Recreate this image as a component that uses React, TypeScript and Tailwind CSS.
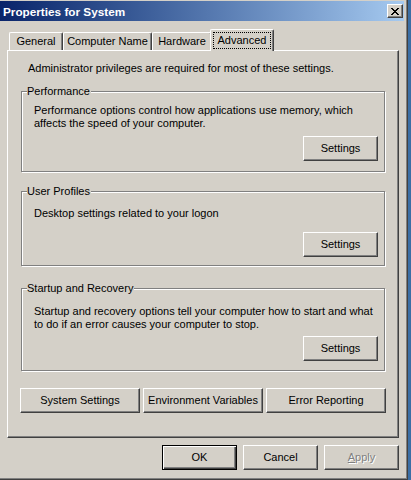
import React from "react";

function Btn({
  children,
  className = "",
  isDefault = false,
}: {
  children: React.ReactNode;
  className?: string;
  isDefault?: boolean;
}) {
  const bevel = isDefault
    ? "border border-black shadow-[inset_1px_1px_0_#fff,inset_-1px_-1px_0_#404040,inset_-2px_-2px_0_#808080]"
    : "border border-t-white border-l-white border-r-[#404040] border-b-[#404040] shadow-[inset_-1px_-1px_0_#808080]";
  return (
    <div
      className={`flex h-[25px] items-center justify-center bg-[#D4D0C8] text-[11px] leading-[13px] text-black ${bevel} ${className}`}
    >
      {children}
    </div>
  );
}

function CloseGlyph() {
  const rows = [
    "XX....XX",
    ".XX..XX.",
    "..XXXX..",
    "...XX...",
    "..XXXX..",
    ".XX..XX.",
    "XX....XX",
  ];
  return (
    <svg width="8" height="7" viewBox="0 0 8 7" shapeRendering="crispEdges">
      {rows.map((r, y) =>
        r.split("").map((c, x) =>
          c === "X" ? <rect key={`${x}-${y}`} x={x} y={y} width="1" height="1" fill="#000" /> : null
        )
      )}
    </svg>
  );
}

function Tab({ label, width }: { label: string; width: string }) {
  return (
    <div
      className={`flex h-[18px] items-center justify-center rounded-tl-[2px] rounded-tr-[2px] border-l border-t border-r border-l-white border-t-white border-r-[#404040] bg-[#D4D0C8] shadow-[inset_-1px_0_0_#808080] ${width}`}
    >
      {label}
    </div>
  );
}

function Group({
  label,
  className,
  children,
}: {
  label: string;
  className: string;
  children: React.ReactNode;
}) {
  return (
    <div
      className={`relative w-[364px] border border-[#808080] shadow-[inset_1px_1px_0_#fff,1px_1px_0_#fff] flex flex-col ${className}`}
    >
      <span className="absolute left-[5px] top-[-7px] bg-[#D4D0C8] pr-[1px] leading-[13px]">{label}</span>
      {children}
    </div>
  );
}

export default function App() {
  return (
    <div className="h-[480px] w-[411px] bg-[#3A6EA5] font-['Liberation_Sans',Arial,sans-serif] text-[11px] leading-[13px] text-black">
      <div className="h-[480px] w-[408px] border-b border-r border-[#404040]">
        <div className="flex h-full flex-col border-b border-r border-[#808080] bg-[#D4D0C8] pr-[2px] pt-[1px]">
          {/* Title bar */}
          <div className="flex h-[20px] items-center justify-between bg-linear-to-r from-[#0A246A] to-[#A6CAF0] pl-[3px] pr-[1px]">
            <span className="text-[11.75px] font-bold text-white">Properties for System</span>
            <div className="flex h-[14px] w-[16px] items-center justify-center border border-t-white border-l-white border-r-[#404040] border-b-[#404040] bg-[#D4D0C8] shadow-[inset_-1px_-1px_0_#808080]">
              <CloseGlyph />
            </div>
          </div>

          {/* Tabs */}
          <div className="mt-[8px] flex h-[21px] items-end pl-[9px]">
            <Tab label="General" width="w-[54px]" />
            <Tab label="Computer Name" width="w-[89px]" />
            <Tab label="Hardware" width="w-[60px]" />
            <div className="relative z-10 -mb-[1px] -ml-[2px] flex h-[22px] w-[64px] items-center justify-center rounded-tl-[2px] rounded-tr-[2px] border-l border-t border-r border-l-white border-t-white border-r-[#404040] bg-[#D4D0C8] shadow-[inset_-1px_0_0_#808080] pb-[1px]">
              Advanced
              <span className="absolute bottom-[2px] left-[2px] right-[2px] top-[2px] border border-dotted border-black" />
            </div>
          </div>

          {/* Tab panel */}
          <div className="ml-[7px] flex h-[388px] w-[392px] flex-col border border-t-white border-l-white border-r-[#404040] border-b-[#404040] pt-[11px] shadow-[inset_-1px_-1px_0_#808080]">
            <div className="pl-[20px]">Administrator privileges are required for most of these settings.</div>

            <Group label="Performance" className="ml-[13px] mt-[16px] pb-[10px] pt-[12px]">
              <div className="pl-[12px]">
                Performance options control how applications use memory, which
                <br />
                affects the speed of your computer.
              </div>
              <div className="mt-[6px] flex justify-end pr-[6px]">
                <Btn className="w-[75px]">Settings</Btn>
              </div>
            </Group>

            <Group label="User Profiles" className="ml-[13px] mt-[19px] pb-[8px] pt-[15px]">
              <div className="pl-[12px]">Desktop settings related to your logon</div>
              <div className="mt-[12px] flex justify-end pr-[6px]">
                <Btn className="w-[75px]">Settings</Btn>
              </div>
            </Group>

            <Group label="Startup and Recovery" className="ml-[13px] mt-[22px] pb-[9px] pt-[16px]">
              <div className="pl-[12px]">
                Startup and recovery options tell your computer how to start and what
                <br />
                to do if an error causes your computer to stop.
              </div>
              <div className="mt-[5px] flex justify-end pr-[6px]">
                <Btn className="w-[75px]">Settings</Btn>
              </div>
            </Group>

            <div className="ml-[12px] mt-[17px] flex gap-[3px]">
              <Btn className="w-[120px]">System Settings</Btn>
              <Btn className="w-[120px]">Environment Variables</Btn>
              <Btn className="w-[120px]">Error Reporting</Btn>
            </div>
          </div>

          {/* Dialog buttons */}
          <div className="mt-[7px] flex justify-end gap-[6px] pr-[5px]">
            <Btn className="w-[75px]" isDefault>
              OK
            </Btn>
            <Btn className="w-[75px]">Cancel</Btn>
            <Btn className="w-[75px]">
              <span className="text-[#808080] [text-shadow:1px_1px_0_#fff]">
                <u>A</u>pply
              </span>
            </Btn>
          </div>
        </div>
      </div>
    </div>
  );
}
